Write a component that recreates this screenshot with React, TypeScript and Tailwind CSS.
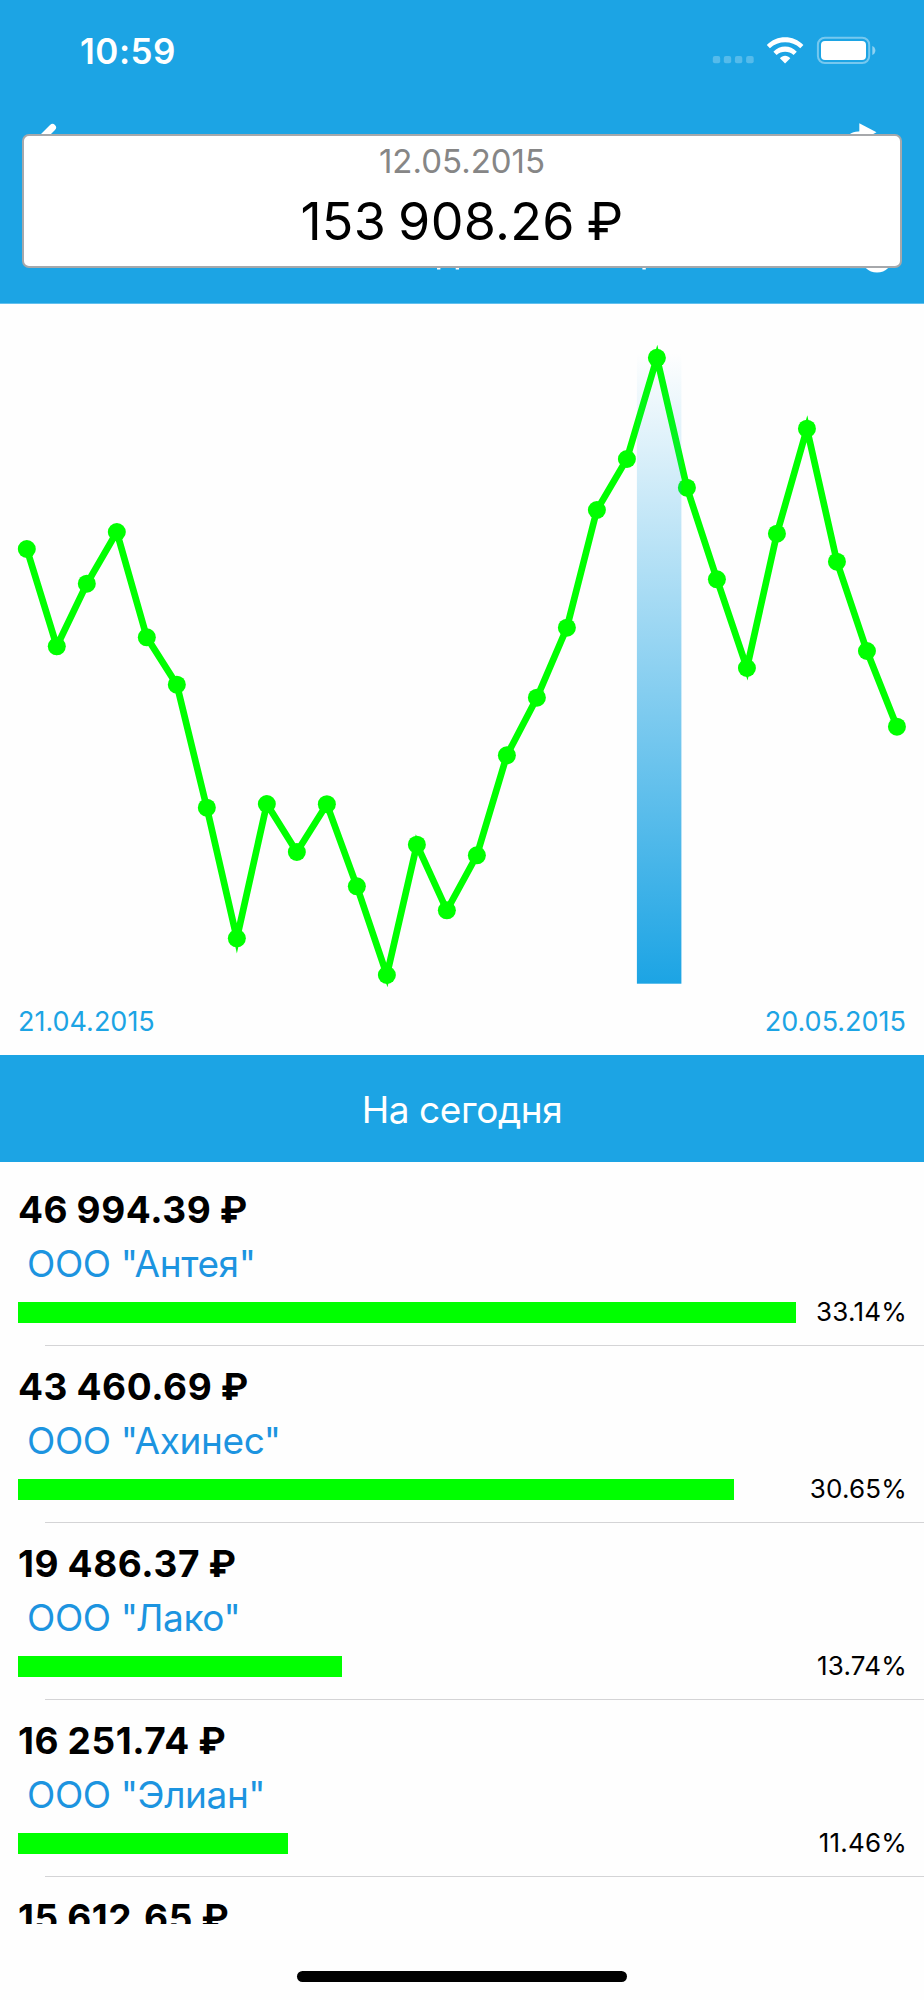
interface Company {
  amount: string;
  name: string;
  percent: number;
  barWidth: number;
}

const COMPANIES: Company[] = [
  { amount: '46 994.39 ₽', name: 'ООО "Антея"', percent: 33.14, barWidth: 778 },
  { amount: '43 460.69 ₽', name: 'ООО "Ахинес"', percent: 30.65, barWidth: 716 },
  { amount: '19 486.37 ₽', name: 'ООО "Лако"', percent: 13.74, barWidth: 323.7 },
  { amount: '16 251.74 ₽', name: 'ООО "Элиан"', percent: 11.46, barWidth: 270 },
  { amount: '15 612.65 ₽', name: '', percent: 0, barWidth: 0 },
];

// Chart geometry
const CHART_TOP = 304;
const FIRST_X = 26.8;
const STEP_X = 30.005;
const VALUES_Y = [
  549, 646.3, 583.7, 532, 637.3, 684.7, 807.7, 938.3, 804, 852, 804.2, 886.3, 975, 844.7, 910.3,
  855.3, 755.3, 697.7, 627.7, 510, 459, 357.8, 487.7, 579.3, 668, 533.7, 428.7, 561.7, 651, 726.7,
];

const points = VALUES_Y.map((y, i) => ({ x: FIRST_X + STEP_X * i, y: y - CHART_TOP }));

function StatusBar() {
  return (
    <div className="flex h-[101px] justify-between pl-[80px] pr-[48px]">
      <span className="mt-[30px] text-[35px] leading-[42px] font-semibold tracking-[0.5px] text-white">
        10:59
      </span>
      <svg className="mt-[36px]" width="164" height="29" viewBox="0 0 164 29" fill="none">
        {/* No cellular signal */}
        <g fill="#fff" fillOpacity="0.25">
          <rect x="0.8" y="20" width="7.4" height="7.2" rx="2" />
          <rect x="11.8" y="20" width="7.4" height="7.2" rx="2" />
          <rect x="22.9" y="20" width="7.4" height="7.2" rx="2" />
          <rect x="34.1" y="20" width="7.6" height="7.2" rx="2" />
        </g>
        {/* Wi-Fi */}
        <g fill="#fff">
          <path d="M54.8 9C64.6 -1.4 81.6 -1.4 91.4 9L88.3 12.2C79.8 4.4 66.4 4.4 57.9 12.2Z" />
          <path d="M61.4 15.8C67.8 8.6 78.4 8.6 84.8 15.8L81.6 19C76.9 14.7 69.3 14.7 64.6 19Z" />
          <path d="M67.9 22.2C70.4 18.8 75.8 18.8 78.3 22.2L73.1 27.4Z" />
        </g>
        {/* Battery */}
        <rect
          x="105.9"
          y="1.7"
          width="51.3"
          height="25.4"
          rx="7"
          stroke="#fff"
          strokeOpacity="0.4"
          strokeWidth="2"
        />
        <rect x="109" y="5" width="45" height="19" rx="4" fill="#fff" />
        <path d="M160.3 10C164.4 11.6 164.4 17.4 160.3 19Z" fill="#fff" fillOpacity="0.5" />
      </svg>
    </div>
  );
}

function Tooltip() {
  return (
    <div className="absolute left-[22px] top-[134px] flex h-[134px] w-[880px] flex-col items-center rounded-[7px] border-2 border-[#a6a8ab] bg-white">
      <span className="mt-[5px] text-[33px] leading-[40px] text-[#868686]">12.05.2015</span>
      <span className="mt-[11px] text-[52px] leading-[60px] tracking-[0.3px] text-black [word-spacing:-3px]">
        153 908.26 ₽
      </span>
    </div>
  );
}

function Header() {
  return (
    <header className="relative h-[304px] border-b border-[#62c0ee] bg-[#1ca4e4]">
      <StatusBar />
      {/* Navigation bar icons, mostly covered by the tooltip */}
      <svg width="924" height="202" viewBox="0 101 924 202" fill="none">
        <path
          d="M52.5 127.5L33 147L52.5 166.5"
          stroke="#fff"
          strokeWidth="7"
          strokeLinecap="round"
          strokeLinejoin="round"
        />
        <path d="M859.3 123.2L876.5 132.3L859.3 141.5Z" fill="#fff" />
        <path d="M846 138C849 133.4 853 131.4 861 131.2V140Z" fill="#fff" />
        <circle cx="877" cy="256.8" r="15.8" fill="#fff" />
        <path d="M850 268H867V268.4H850Z" fill="#fff" fillOpacity="0.2" />
        <path d="M437 260H440.4V269.6H437ZM455.7 260H459V269.6H455.7ZM642.4 260H645.8V269.6H642.4Z" fill="#fff" />
      </svg>
      <Tooltip />
    </header>
  );
}

function Chart() {
  return (
    <section className="h-[751px]">
      <svg width="924" height="694" viewBox="0 0 924 694" fill="none">
        <defs>
          <linearGradient id="selection" x1="0" y1="0" x2="0" y2="1">
            <stop offset="0" stopColor="#1ca4e4" stopOpacity="0" />
            <stop offset="1" stopColor="#1ca4e4" />
          </linearGradient>
        </defs>
        <polyline
          points={points.map(p => `${p.x},${p.y}`).join(' ')}
          stroke="#00ff00"
          strokeWidth="6.7"
          strokeMiterlimit="10"
        />
        {points.map((p, i) => (
          <circle key={i} cx={p.x} cy={p.y} r="9" fill="#00ff00" />
        ))}
        <rect x="636.9" y="49" width="44.5" height="630.7" fill="url(#selection)" />
      </svg>
      <div className="mt-[8px] flex justify-between px-[18px] text-[27px] leading-[32px] text-[#1ca4e4]">
        <span>21.04.2015</span>
        <span>20.05.2015</span>
      </div>
    </section>
  );
}

function CompanyRow({ company }: { company: Company }) {
  return (
    <li className="flex h-[177.1px] shrink-0 flex-col">
      <div className="flex h-[176.1px] shrink-0 flex-col pl-[18px] pr-[17px] pt-[18px]">
        <span className="text-[37px] leading-[46px] font-bold tracking-[0.6px] text-black [word-spacing:-1px]">
          {company.amount}
        </span>
        {company.name && (
          <>
            <span className="mt-[9px] pl-[9px] text-[37px] leading-[44px] tracking-[-0.4px] text-[#1c94e0]">
              {company.name}
            </span>
            <div className="mt-[10px] flex h-[32px] items-center justify-between">
              <div className="h-[21px] bg-[#00ff00]" style={{ width: company.barWidth }} />
              <span className="text-[26px] leading-[32px] tracking-[0.2px] text-black">
                {company.percent}%
              </span>
            </div>
          </>
        )}
      </div>
      <div className="ml-[45px] h-px shrink-0 bg-[#d4d4d6]" />
    </li>
  );
}

export default function App() {
  return (
    <div className="flex h-[2000px] w-[924px] flex-col overflow-hidden bg-[#fefefe] font-['Inter',sans-serif]">
      <Header />
      <Chart />
      <h2 className="flex h-[107px] items-center justify-center bg-[#1ca4e4] pt-[2px] text-[37px] leading-[44px] tracking-[-0.4px] text-white">
        На сегодня
      </h2>
      <ul className="flex h-[762px] flex-col overflow-hidden pt-[7px]">
        {COMPANIES.map(company => (
          <CompanyRow key={company.amount} company={company} />
        ))}
      </ul>
      {/* Home indicator */}
      <div className="mt-[47px] h-[11px] w-[330px] self-center rounded-full bg-black" />
    </div>
  );
}
